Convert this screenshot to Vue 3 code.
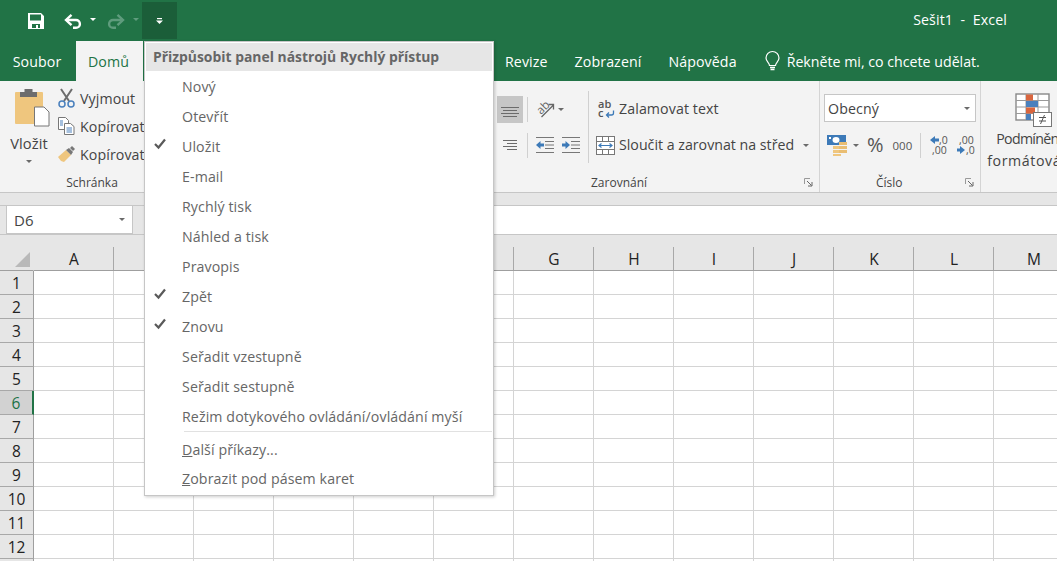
<script setup>
const tabsRight = ['Revize', 'Zobrazení', 'Nápověda']
const menuItems = [
  { label: 'Nový' },
  { label: 'Otevřít' },
  { label: 'Uložit', checked: true },
  { label: 'E-mail' },
  { label: 'Rychlý tisk' },
  { label: 'Náhled a tisk' },
  { label: 'Pravopis' },
  { label: 'Zpět', checked: true },
  { label: 'Znovu', checked: true },
  { label: 'Seřadit vzestupně' },
  { label: 'Seřadit sestupně' },
  { label: 'Režim dotykového ovládání/ovládání myší' }
]
const columns = 'ABCDEFGHIJKLM'.split('')
const rows = Array.from({ length: 13 }, (_, i) => i + 1)
</script>

<template>
  <div class="app">
    <header class="titlebar">
      <svg class="ic-save" width="16" height="16" viewBox="0 0 16 16"><path fill="#fff" fill-rule="evenodd" d="M0 0h13l3 3v13H0zM2 1.500v6h11v-6zM4 11v4h8v-4z"/><rect x="8" y="12" width="2" height="3" fill="#fff"/></svg>
      <svg class="ic-undo" width="18" height="15" viewBox="0 0 18 15"><path d="M2.500 6H12a3.800 3.800 0 0 1 0 7.800H9" fill="none" stroke="#fff" stroke-width="2.400"/><path d="M7.500 .8 2 6l5.500 5.200" fill="none" stroke="#fff" stroke-width="2.400"/></svg>
      <span class="caret caret-white undo-caret"></span>
      <svg class="ic-redo" width="18" height="15" viewBox="0 0 18 15"><path d="M15.500 6H6a3.800 3.800 0 0 0 0 7.800H9" fill="none" stroke="#5f9c7d" stroke-width="2.400"/><path d="M10.500 .8 16 6l-5.500 5.200" fill="none" stroke="#5f9c7d" stroke-width="2.400"/></svg>
      <span class="caret caret-dim redo-caret"></span>
      <div class="qat-more">
        <svg width="7" height="6" viewBox="0 0 7 6"><rect x="1" y="0" width="5" height="1.200" fill="#fff"/><path d="M0 2.500h7L3.500 6z" fill="#fff"/></svg>
      </div>
      <div class="doc-title">Sešit1&nbsp; - &nbsp;Excel</div>
    </header>

    <nav class="tabs">
      <span class="tab tab-file">Soubor</span>
      <span class="tab tab-active">Domů</span>
      <span class="tabs-hidden"></span>
      <span v-for="tab in tabsRight" :key="tab" class="tab tab-plain">{{ tab }}</span>
      <svg class="ic-bulb" width="15" height="21" viewBox="0 0 15 21"><path d="M4.500 14.500c0-2.500-3.500-4-3.500-7.500a6.500 6.500 0 0 1 13 0c0 3.500-3.500 5-3.500 7.500z" fill="none" stroke="#fff" stroke-width="1.200"/><path d="M5 16.500h5M5.500 18.500h4" stroke="#fff" stroke-width="1.300"/></svg>
      <span class="tell">Řekněte mi, co chcete udělat.</span>
    </nav>

    <section class="ribbon">
      <div class="group group-clip">
        <div class="group-body clip-body">
          <div class="paste">
            <svg width="35" height="39" viewBox="0 0 35 39"><rect x="0" y="4" width="28" height="32" rx="1" fill="#efc67e"/><path d="M5 9V4h4.500V1h8v3H22v5z" fill="#6d6d6d"/><path d="M19.500 19H29l5 5v14H19.500z" fill="#fff" stroke="#777"/></svg>
            <span class="paste-label">Vložit</span>
            <span class="caret caret-gray"></span>
          </div>
          <div class="clip-cmds">
            <div class="cmd">
              <svg width="17" height="19" viewBox="0 0 17 19"><path d="M3 0l8 12M14 0L6 12" stroke="#6d6d6d" stroke-width="2"/><circle cx="4" cy="15" r="3" fill="none" stroke="#4a80bd" stroke-width="1.500"/><circle cx="13" cy="15" r="3" fill="none" stroke="#4a80bd" stroke-width="1.500"/></svg>
              <span>Vyjmout</span>
            </div>
            <div class="cmd">
              <svg width="17" height="18" viewBox="0 0 17 18"><path d="M.5.5h7l3 3v9H.5z" fill="#fff" stroke="#777"/><path d="M6.500 6.500h6l3.500 3v8H6.500z" fill="#fff" stroke="#777"/><path d="M8.500 11h5.500M8.500 13h5.500M8.500 15h5.500M2 4h3M2 6h3M2 8h3" stroke="#4a80bd"/></svg>
              <span>Kopírovat</span>
            </div>
            <div class="cmd">
              <svg width="17" height="17" viewBox="0 0 17 17"><path d="M0 11 8 4l5 5-7 7-3-1z" fill="#efc67e"/><path d="M8 4l3-2 4 4-2 3z" fill="#777"/><path d="M12 2l2-2 3 3-2 2z" fill="#777"/></svg>
              <span>Kopírovat</span>
            </div>
          </div>
        </div>
        <div class="group-label label-center">Schránka</div>
      </div>

      <div class="group group-font"></div>

      <div class="group group-align">
        <div class="group-body align-body">
          <div class="align-left">
            <div class="align-row">
              <div class="align-btn align-btn-on">
                <svg width="18" height="11" viewBox="0 0 18 11"><path d="M0 .5h18M2 3.500h14M0 6.500h18M2 9.500h14" stroke="#6b6b6b"/></svg>
              </div>
              <i class="vsep"></i>
              <svg class="ic-orient" width="20" height="18" viewBox="0 0 20 18"><text x="2" y="12.500" transform="rotate(-45 7 9)" class="svg-text" font-size="11.500" fill="#666">ab</text><path d="M6.500 17 18 5.500M13.500 4.500h5V9.500" fill="none" stroke="#666" stroke-width="1.300"/></svg>
              <span class="caret caret-gray orient-caret"></span>
            </div>
            <div class="align-row">
              <div class="align-btn">
                <svg width="14" height="11" viewBox="0 0 14 11"><path d="M0 .5h14M4 3.500h10M0 6.500h14M4 9.500h10" stroke="#6b6b6b"/></svg>
              </div>
              <i class="vsep"></i>
              <svg class="ic-indent-a" width="18" height="16" viewBox="0 0 18 16"><path d="M0 .5h18M9 4.500h9M9 8h9M9 11.500h9M0 15.500h18" stroke="#777"/><path d="M0 8l4.500-4v2.500H8v3H4.500V12z" fill="#3d7ab8"/></svg>
              <svg class="ic-indent-b" width="18" height="16" viewBox="0 0 18 16"><path d="M0 .5h18M9 4.500h9M9 8h9M9 11.500h9M0 15.500h18" stroke="#777"/><path d="M8 8 3.500 4v2.500H0v3h3.500V12z" fill="#3d7ab8"/></svg>
            </div>
          </div>
          <i class="vsep vsep-tall"></i>
          <div class="align-right">
            <div class="wide-cmd wide-wrap">
              <svg width="17" height="18" viewBox="0 0 17 18"><text x="0" y="8" class="svg-text-bold" font-size="11" fill="#555">ab</text><text x="0" y="17" class="svg-text-bold" font-size="11" fill="#555">c</text><path d="M15.500 10.500v2.500a2 2 0 0 1-2 2H8.500M11 12.500 8.500 15l2.500 2.500" fill="none" stroke="#3d7ab8" stroke-width="1.300"/></svg>
              <span>Zalamovat text</span>
            </div>
            <div class="wide-cmd wide-merge">
              <svg width="19" height="19" viewBox="0 0 19 19"><rect x=".5" y=".5" width="18" height="18" fill="#fff" stroke="#777"/><path d="M0 5.500h19M0 13.500h19M6.500 0v5M12.500 0v5M6.500 14v5M12.500 14v5" stroke="#777"/><path d="M3 9.500h13M5.500 7.500l-2.500 2 2.500 2M13.500 7.500l2.500 2-2.500 2" fill="none" stroke="#3d7ab8" stroke-width="1.200"/></svg>
              <span>Sloučit a zarovnat na střed</span>
              <span class="caret caret-gray merge-caret"></span>
            </div>
          </div>
        </div>
        <div class="group-label label-align">
          <span>Zarovnání</span>
          <svg class="launcher launcher-align" width="9" height="9" viewBox="0 0 9 9"><path d="M.5 6V.5H6" fill="none" stroke="#999"/><path d="M3 3l4.500 4.500M8 4v4H4" fill="none" stroke="#666"/></svg>
        </div>
      </div>

      <div class="group group-number">
        <div class="group-body number-body">
          <div class="combo"><span>Obecný</span><span class="caret caret-gray"></span></div>
          <div class="number-row">
            <svg width="20" height="21" viewBox="0 0 20 21"><rect x="0" y="0" width="19" height="10" fill="#3d7ab8"/><ellipse cx="9" cy="5" rx="3.500" ry="3" fill="#fff"/><rect x="2" y="2" width="2" height="2" fill="#fff"/><path d="M6 11h8v3H6zM6 15h8v3H6zM6 19h8v2H6z" fill="#efc67e"/><path d="M12 7h8v3h-8zM12 11h8v3h-8zM12 15h8v3h-8z" fill="#e9bd72"/></svg>
            <span class="caret caret-gray num-caret"></span>
            <span class="percent">%</span>
            <span class="thousands">000</span>
            <i class="vsep"></i>
            <svg class="ic-dec-a" width="18" height="20" viewBox="0 0 18 20"><path d="M0 5l5-4v2.500h4v3H5V9z" fill="#3d7ab8"/><text x="9" y="9" class="svg-text" font-size="10.500" fill="#555">,0</text><text x="2" y="19" class="svg-text" font-size="10.500" fill="#555">,00</text></svg>
            <svg class="ic-dec-b" width="17" height="20" viewBox="0 0 17 20"><text x="2" y="9" class="svg-text" font-size="10.500" fill="#555">,00</text><path d="M8 15l-5-4v2.500H0v3h3V19z" fill="#3d7ab8"/><text x="9" y="19" class="svg-text" font-size="10.500" fill="#555">,0</text></svg>
          </div>
        </div>
        <div class="group-label label-number">
          <span>Číslo</span>
          <svg class="launcher" width="9" height="9" viewBox="0 0 9 9"><path d="M.5 6V.5H6" fill="none" stroke="#999"/><path d="M3 3l4.500 4.500M8 4v4H4" fill="none" stroke="#666"/></svg>
        </div>
      </div>

      <div class="group-styles">
        <svg class="ic-cond" width="38" height="40" viewBox="0 0 38 40">
          <rect x="1" y="1" width="33" height="26" fill="#fff" stroke="#888" stroke-width="1.400"/>
          <path d="M11 1v26M23 1v26M1 7.500h33M1 14h33M1 20.500h33" stroke="#999"/>
          <rect x="11" y="1.500" width="7" height="6" fill="#d9663f"/>
          <rect x="11" y="8" width="12" height="6" fill="#4a80bd"/>
          <rect x="11" y="14.500" width="9" height="6" fill="#d9663f"/>
          <rect x="11" y="21" width="5" height="6" fill="#4a80bd"/>
          <rect x="18.500" y="19.500" width="18" height="14" fill="#fff" stroke="#777"/>
          <path d="M24 24.500h7M24 28h7M29.500 22l-4 9" stroke="#555" fill="none"/>
        </svg>
        <div class="styles-text styles-first">Podmíněné</div>
        <div class="styles-text styles-second">formátování</div>
      </div>
    </section>

    <div class="band"></div>

    <section class="formula">
      <div class="namebox-area">
        <div class="namebox"><span>D6</span><span class="caret caret-gray"></span></div>
      </div>
      <div class="formula-input"></div>
    </section>

    <section class="sheet">
      <div class="corner"><span class="corner-tri"></span></div>
      <div v-for="c in columns" :key="c" class="col-head"><span>{{ c }}</span></div>
      <template v-for="r in rows" :key="r">
        <div class="row-head" :class="{ 'row-head-on': r === 6 }">{{ r < 13 ? r : '' }}</div>
        <div v-for="c in columns" :key="c + r" class="cell"></div>
      </template>
    </section>

    <div class="qat-menu">
      <div class="menu-title">Přizpůsobit panel nástrojů Rychlý přístup</div>
      <div v-for="item in menuItems" :key="item.label" class="menu-item">
        <svg v-if="item.checked" class="check" width="12" height="11" viewBox="0 0 12 11"><path d="M1 6l3.500 3.500L11 1.500" fill="none" stroke="#5a5a5a" stroke-width="2.200"/></svg>
        <span>{{ item.label }}</span>
      </div>
      <div class="menu-sep"></div>
      <div class="menu-item"><span><u>D</u>alší příkazy...</span></div>
      <div class="menu-item menu-last"><span><u>Z</u>obrazit pod pásem karet</span></div>
    </div>
  </div>
</template>

<style>
html, body { margin: 0; padding: 0; background: #fff; overflow: hidden; }
</style>

<style scoped>
.app {
  position: relative;
  width: 1057px;
  height: 561px;
  overflow: hidden;
  font-family: "Open Sans", "Noto Sans", sans-serif;
  font-size: 14.200px;
  letter-spacing: .1px;
  color: #444;
  background: #fff;
}
svg { overflow: visible; flex-shrink: 0; }
.caret { display: inline-block; width: 0; height: 0; border-left: 3.500px solid transparent; border-right: 3.500px solid transparent; border-top: 3.500px solid #666; }
.caret-white { border-top-color: #fff; }
.caret-dim { border-top-color: #5f9c7d; }
.caret-gray { border-top-color: #6a6a6a; }

.titlebar { display: flex; align-items: center; height: 41px; background: #217346; }
.ic-save { margin-left: 28px; margin-top: 1px; }
.ic-undo { margin-left: 20px; margin-top: 1px; }
.undo-caret { margin-left: 8px; margin-top: -3px; }
.ic-redo { margin-left: 11px; margin-top: 1px; }
.redo-caret { margin-left: 8px; margin-top: -3px; }
.qat-more { display: flex; align-items: center; justify-content: center; width: 35px; height: 37px; margin-left: 3px; background: #1b5e39; }
.doc-title { margin-left: auto; margin-right: 50px; margin-top: -2px; color: #fff; }

.tabs { display: flex; align-items: center; height: 40px; background: #217346; color: #fff; }
.tab { display: flex; align-items: center; justify-content: center; height: 40px; }
.tab-file { width: 76px; box-sizing: border-box; padding-right: 2px; }
.tab-active { width: 67px; box-sizing: border-box; padding-right: 2px; background: #f3f3f3; color: #217346; }
.tabs-hidden { width: 349px; }
.tab-plain { margin-left: 13px; margin-right: 14px; }
.ic-bulb { margin-left: 14px; }
.tell { margin-left: 7px; letter-spacing: 0; }

.ribbon { display: flex; height: 111px; background: #f3f3f3; border-bottom: 1px solid #c6c6c6; color: #444; }
.group { display: flex; flex-direction: column; flex-shrink: 0; }
.group-body { display: flex; height: 91px; }
.group-label { display: flex; align-items: center; height: 20px; font-size: 12px; letter-spacing: 0; color: #444; }
.label-center { justify-content: center; }
.launcher { margin-left: auto; margin-right: 6px; }

.group-clip { width: 184px; }
.clip-body { padding-top: 3px; box-sizing: border-box; }
.paste { display: flex; flex-direction: column; align-items: center; width: 58px; padding-top: 4px; }
.paste svg { margin-left: 6px; }
.paste-label { margin-top: 6px; font-size: 14.700px; line-height: 20px; }
.paste .caret { margin-top: 7px; }
.clip-cmds { display: flex; flex-direction: column; }
.cmd { display: flex; align-items: center; gap: 5px; height: 28px; white-space: nowrap; }

.group-font { width: 309px; }

.group-align { width: 327px; border-right: 1px solid #d4d4d4; box-sizing: border-box; }
.align-body { padding-top: 10px; box-sizing: border-box; }
.align-left { display: flex; flex-direction: column; width: 95px; }
.align-row { display: flex; align-items: center; height: 36px; }
.align-btn { display: flex; align-items: center; justify-content: center; width: 26px; height: 27px; margin-left: 4px; }
.align-btn-on { background: #c6c6c6; align-items: flex-end; padding-bottom: 5px; box-sizing: border-box; }
.vsep { display: block; width: 1px; height: 25px; margin-left: 4px; background: #d0d0d0; flex-shrink: 0; }
.vsep-tall { height: 72px; margin-left: 0; }
.ic-orient { margin-left: 7px; }
.orient-caret { margin-left: 3px; }
.ic-indent-a { margin-left: 8px; }
.ic-indent-b { margin-left: 8px; }
.align-right { display: flex; flex-direction: column; }
.wide-cmd { display: flex; align-items: center; height: 36px; white-space: nowrap; }
.wide-wrap { padding-left: 9px; gap: 4px; }
.wide-wrap span { margin-top: -2px; }
.wide-merge { padding-left: 7px; gap: 4px; letter-spacing: 0; }
.wide-merge span:first-of-type { margin-top: -1px; }
.merge-caret { margin-left: 5px; }
.label-align { padding-left: 98px; }
.svg-text { font-family: "Open Sans", sans-serif; letter-spacing: 0; }
.svg-text-bold { font-family: "Open Sans", sans-serif; font-weight: 600; letter-spacing: 0; }

.group-number { width: 161px; border-right: 1px solid #d4d4d4; box-sizing: border-box; }
.number-body { flex-direction: column; padding: 13px 4px 0 4px; box-sizing: border-box; }
.combo { display: flex; align-items: center; justify-content: space-between; width: 152px; height: 28px; box-sizing: border-box; padding: 0 5px 0 3px; background: #fff; border: 1px solid #c6c6c6; flex-shrink: 0; }
.number-row { display: flex; align-items: center; height: 36px; margin-top: 5px; padding-left: 3px; }
.num-caret { margin-left: 6px; }
.percent { margin-left: 8px; font-size: 20px; color: #555; line-height: 1; letter-spacing: 0; }
.thousands { margin-left: 9px; font-size: 11.500px; color: #555; letter-spacing: 0; }
.number-row .vsep { margin-left: 8px; }
.ic-dec-a { margin-left: 9px; }
.ic-dec-b { margin-left: 9px; }
.label-number { padding-left: 56px; }

.group-styles { display: flex; flex-direction: column; align-items: center; width: 100px; flex-shrink: 0; padding-top: 12px; box-sizing: border-box; }
.ic-cond { margin-left: 5px; }
.styles-text { white-space: nowrap; line-height: 20px; margin-top: -4px; }
.styles-first { letter-spacing: -.7px; }
.styles-second { margin-top: 2px; letter-spacing: .6px; }

.band { height: 12px; background: #e6e6e6; border-bottom: 1px solid #c6c6c6; }

.formula { display: flex; height: 28px; border-bottom: 1px solid #c6c6c6; }
.namebox-area { width: 200px; background: #e6e6e6; padding-left: 6px; box-sizing: border-box; }
.namebox { display: flex; align-items: center; justify-content: space-between; width: 127px; height: 29px; margin-top: -1px; box-sizing: border-box; padding: 0 7px 0 7px; background: #fff; border: 1px solid #c6c6c6; font-size: 15px; letter-spacing: 0; color: #444; }
.formula-input { flex: 1; background: #fff; }

.sheet { display: grid; grid-template-columns: 34px repeat(13, 80px); grid-template-rows: 36px repeat(13, 24px); }
.corner { display: flex; align-items: flex-end; justify-content: flex-end; padding: 0 3px 3px 0; box-sizing: border-box; background: #e6e6e6; border-bottom: 1px solid #9f9f9f; border-right: 1px solid #e6e6e6; }
.corner-tri { width: 0; height: 0; border-left: 15px solid transparent; border-bottom: 15px solid #b9b9b9; }
.col-head { display: flex; align-items: flex-end; background: #e6e6e6; border-bottom: 1px solid #9f9f9f; box-sizing: border-box; }
.col-head span { flex: 1; height: 23px; padding-top: 1px; padding-left: 1px; box-sizing: border-box; line-height: 23px; text-align: center; border-right: 1px solid #a8a8a8; font-size: 15.500px; letter-spacing: 0; color: #222; }
.row-head { display: flex; align-items: center; justify-content: center; box-sizing: border-box; padding-top: 1px; background: #e6e6e6; border-right: 1px solid #9f9f9f; border-bottom: 1px solid #a8a8a8; font-size: 15.500px; letter-spacing: 0; color: #222; }
.row-head-on { background: #d2d2d2; color: #217346; border-right: 2px solid #217346; }
.cell { box-sizing: border-box; border-right: 1px solid #d4d4d4; border-bottom: 1px solid #d4d4d4; }

.qat-menu { position: absolute; left: 144px; top: 41px; width: 350px; height: 455px; box-sizing: border-box; padding: 1px; background: #fff; border: 1px solid #c6c6c6; box-shadow: 1px 1px 3px rgba(0, 0, 0, .2); color: #666; }
.menu-title { display: flex; align-items: center; height: 28px; margin-bottom: 1px; padding: 0 0 2px 7px; box-sizing: border-box; background: #e6e6e6; font-weight: 700; font-size: 13.900px; letter-spacing: 0; color: #666; }
.menu-item { position: relative; display: flex; align-items: center; height: 30px; padding-left: 36px; padding-bottom: 2px; box-sizing: border-box; white-space: nowrap; }
.check { position: absolute; left: 8px; top: 6px; }
.menu-sep { height: 1px; margin: -1px 0 3px 38px; background: #e1e1e1; }
.menu-last { height: 29px; }
</style>
